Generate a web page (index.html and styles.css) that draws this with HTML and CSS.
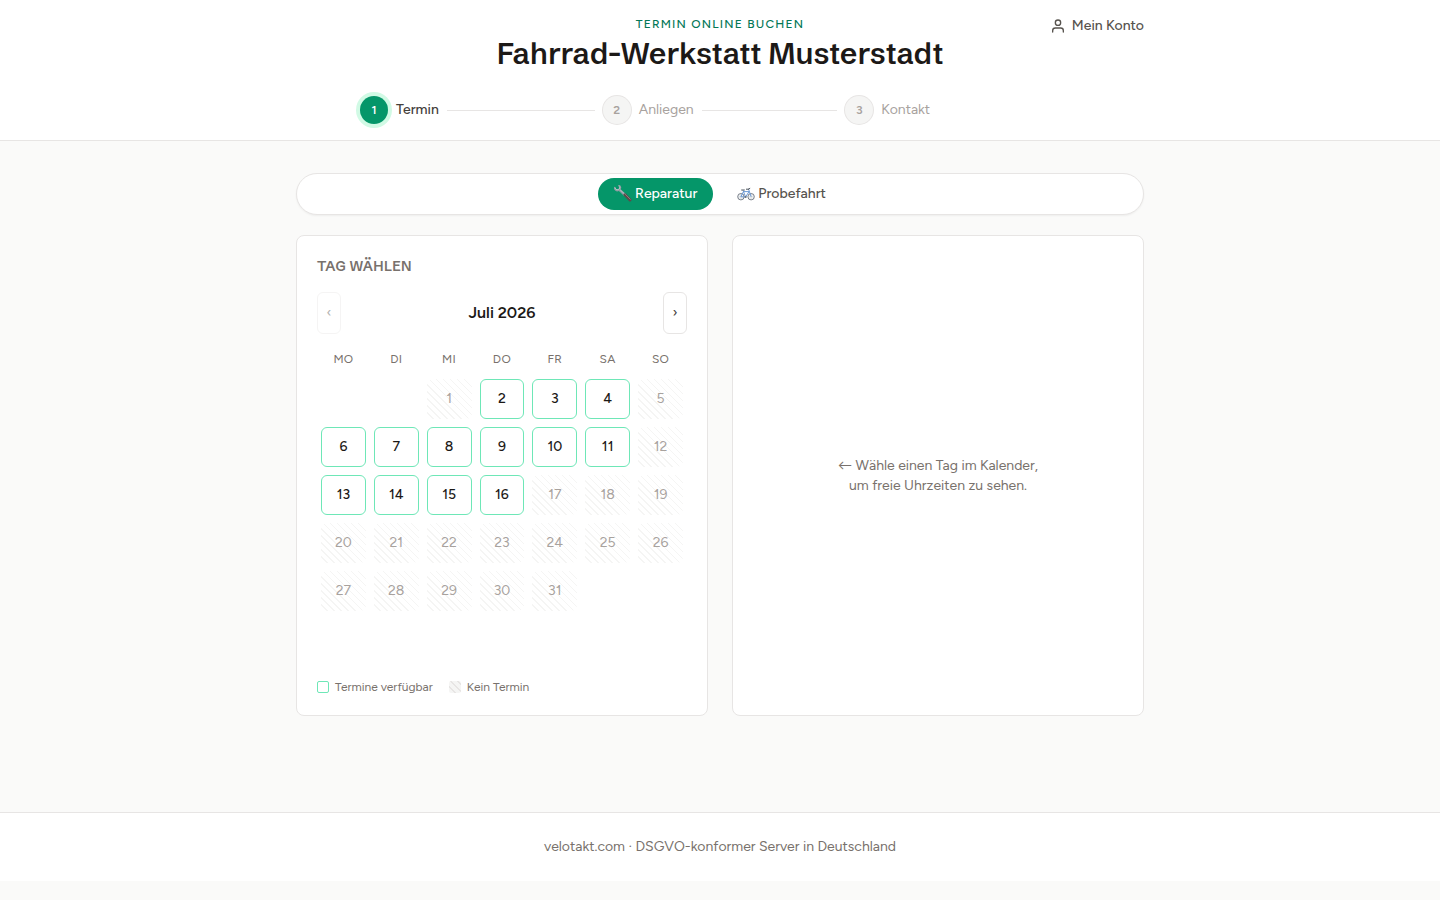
FILE: index.html
```html
<!DOCTYPE html>
<html lang="de">
<head>
  <meta charset="UTF-8" />
  <meta name="viewport" content="width=device-width, initial-scale=1.0" />
  <title>Termin online buchen - Fahrrad-Werkstatt Musterstadt</title>
  <link rel="stylesheet" href="styles.css">
</head>
<body>

  <header class="kopf">
    <div class="kopf-inner">
      <div class="kopf-titel">
        <p class="kopf-label">Termin online buchen</p>
        <h1>Fahrrad-Werkstatt Musterstadt</h1>
      </div>
      <a class="konto" href="#">
        <svg width="16" height="16" viewBox="0 0 24 24" fill="none" stroke="currentColor" stroke-width="2" stroke-linecap="round" stroke-linejoin="round" aria-hidden="true">
          <path d="M20 21v-2a4 4 0 0 0-4-4H8a4 4 0 0 0-4 4v2" />
          <circle cx="12" cy="7" r="4" />
        </svg>
        Mein Konto
      </a>
    </div>

    <ol class="schritte">
      <li class="schritt aktiv"><span class="nummer">1</span><span>Termin</span></li>
      <li class="schritt"><span class="nummer">2</span><span>Anliegen</span></li>
      <li class="schritt"><span class="nummer">3</span><span>Kontakt</span></li>
    </ol>
  </header>

  <main>
    <div class="tabs">
      <button type="button" class="tab aktiv">
        <svg width="18" height="18" viewBox="0 0 18 18" fill="none" aria-hidden="true">
          <path d="M5 4.4 11 10" stroke="#8d9ba1" stroke-width="2.6" />
          <path d="M5.4 4.2 11 9.4" stroke="#c3ced2" stroke-width="0.8" />
          <path d="M11 9.8 16 15" stroke="#5d4a4a" stroke-width="3" stroke-linecap="round" />
          <path d="M11.4 9.4 16.2 14.2" stroke="#94807e" stroke-width="0.9" stroke-linecap="round" />
          <path d="M.8 2C.4 4.4 2.4 6 4.6 5.2 6.8 4.4 7 1.4 4.4.2" stroke="#8d9ba1" stroke-width="1.9" />
          <path d="M1 2.8C1.4 4.4 2.8 5 4.4 4.4 5.6 3.8 6 2.6 5.6 1.6" stroke="#d3dce0" stroke-width="0.7" />
        </svg>
        Reparatur
      </button>
      <button type="button" class="tab">
        <svg width="18" height="18" viewBox="0 0 18 18" fill="none" aria-hidden="true">
          <circle cx="3.9" cy="11.7" r="3.2" fill="#f3f5f7" stroke="#6a717a" stroke-width="0.9" />
          <circle cx="14.1" cy="11.7" r="3.2" fill="#f3f5f7" stroke="#6a717a" stroke-width="0.9" />
          <path d="M3.9 8.5v6.4M.7 11.7h6.4M14.1 8.5v6.4M10.9 11.7h6.4" stroke="#b4bac1" stroke-width="0.4" />
          <path d="M3.9 11.7 6.4 6.6H12L8.6 12zM6 5.2 8.6 12M11.6 4.2l2.5 7.5" stroke="#6d9ad6" stroke-width="1" stroke-linejoin="round" />
          <path d="M4.6 5h2.8M11.4 4.2h-2M11.4 4.2l1.4-.8" stroke="#4f565e" stroke-width="1" stroke-linecap="round" />
          <circle cx="8.6" cy="12" r="1.1" fill="#6a717a" />
        </svg>
        Probefahrt
      </button>
    </div>

    <div class="spalten">
      <section class="karte">
        <h2>Tag wählen</h2>

        <div class="monat">
          <button type="button" aria-label="Vorheriger Monat" disabled>‹</button>
          <strong>Juli 2026</strong>
          <button type="button" aria-label="Nächster Monat">›</button>
        </div>

        <div class="kalender">
          <table>
            <thead>
              <tr><th>Mo</th><th>Di</th><th>Mi</th><th>Do</th><th>Fr</th><th>Sa</th><th>So</th></tr>
            </thead>
            <tbody id="tage"></tbody>
          </table>
        </div>

        <div class="legende">
          <span><i class="feld frei"></i>Termine verfügbar</span>
          <span><i class="feld belegt"></i>Kein Termin</span>
        </div>
      </section>

      <section class="karte hinweis">
        <p><span class="pfeil">←</span> Wähle einen Tag im Kalender,<br>um freie Uhrzeiten zu sehen.</p>
      </section>
    </div>
  </main>

  <footer class="footer">velotakt.com · DSGVO-konformer Server in Deutschland</footer>

  <script>
    const freieTage = [2, 3, 4, 6, 7, 8, 9, 10, 11, 13, 14, 15, 16];
    const ersterWochentag = 2; // 1. Juli ist ein Mittwoch
    const anzahlTage = 31;
    const tbody = document.getElementById('tage');

    let zeile;
    for (let i = 0; i < ersterWochentag + anzahlTage; i++) {
      if (i % 7 === 0) {
        zeile = tbody.insertRow();
      }
      const zelle = zeile.insertCell();
      const tag = i - ersterWochentag + 1;
      if (tag < 1) continue;

      const btn = document.createElement('button');
      btn.type = 'button';
      btn.className = 'tag';
      btn.textContent = tag;
      btn.disabled = !freieTage.includes(tag);
      zelle.appendChild(btn);
    }
  </script>
</body>
</html>
```
FILE: styles.css
```css
* {
  box-sizing: border-box;
}

body {
  font-family: Figtree, Lato, 'Open Sans', sans-serif;
  font-size: 14px;
  line-height: 20px;
  background-color: #fafaf9;
  margin: 0;
  color: #1c1917;
}

h1, h2, p {
  margin: 0;
}

h1, h2 {
  font-family: 'Schibsted Grotesk', 'Libre Franklin', Inter, sans-serif;
  font-weight: 600;
}

button {
  font: inherit;
  cursor: pointer;
}

/* Kopfbereich */
.kopf {
  background-color: #fff;
  border-bottom: 1px solid #e7e5e4;
  padding: 16px 24px;
}

.kopf-inner {
  display: grid;
  grid-template-columns: 1fr auto 1fr;
  align-items: start;
  max-width: 848px;
  margin: 0 auto 24px;
}

.kopf-titel {
  grid-column: 2;
  text-align: center;
}

.kopf-label {
  font-size: 12px;
  line-height: 16px;
  font-weight: 500;
  letter-spacing: 0.1em;
  text-transform: uppercase;
  color: #047857;
}

h1 {
  font-size: 30px;
  line-height: 36px;
  margin-top: 4px;
}

.konto {
  justify-self: end;
  display: flex;
  align-items: center;
  gap: 6px;
  font-weight: 500;
  color: #57534e;
  text-decoration: none;
}

.schritte {
  display: grid;
  grid-template-columns: repeat(3, 1fr);
  gap: 8px;
  max-width: 720px;
  margin: 0 auto;
  padding: 0;
  list-style: none;
}

.schritt {
  display: flex;
  align-items: center;
  gap: 8px;
  color: #a8a29e;
}

.schritt::after {
  content: '';
  flex: 1;
  height: 1px;
  background-color: #e7e5e4;
}

.schritt:last-child::after {
  display: none;
}

.schritt.aktiv {
  color: #44403c;
  font-weight: 500;
}

.nummer {
  display: flex;
  align-items: center;
  justify-content: center;
  width: 28px;
  height: 28px;
  border-radius: 50%;
  background-color: #f5f5f4;
  box-shadow: 0 0 0 1px #e7e5e4;
  font-size: 12px;
  font-weight: 600;
}

.aktiv .nummer {
  background-color: #059669;
  box-shadow: 0 0 0 4px #d1fae5;
  color: #fff;
}

/* Inhalt */
main {
  max-width: 896px;
  margin: 0 auto;
  padding: 32px 24px 96px;
}

.tabs {
  display: flex;
  justify-content: center;
  gap: 8px;
  padding: 4px;
  margin-bottom: 20px;
  background-color: #fff;
  border: 1px solid #e7e5e4;
  border-radius: 999px;
  box-shadow: 0 1px 2px rgba(0,0,0,0.05);
}

.tab {
  display: flex;
  align-items: center;
  gap: 3px;
  padding: 6px 16px;
  border: none;
  border-radius: 999px;
  background: none;
  color: #57534e;
  font-weight: 500;
}

.tab.aktiv {
  background-color: #059669;
  color: #fff;
}

.spalten {
  display: grid;
  grid-template-columns: 1fr 1fr;
  gap: 24px;
}

.karte {
  background-color: #fff;
  border: 1px solid #e7e5e4;
  border-radius: 8px;
  padding: 20px;
}

h2 {
  font-size: 14px;
  line-height: 20px;
  letter-spacing: 0.025em;
  text-transform: uppercase;
  color: #78716c;
}

/* Kalender */
.monat {
  display: flex;
  align-items: center;
  justify-content: space-between;
  margin: 16px 0 8px;
}

.monat strong {
  font-size: 16px;
  font-weight: 600;
}

.monat button {
  width: 24px;
  height: 42px;
  padding: 0;
  border: 1px solid #e7e5e4;
  border-radius: 6px;
  background-color: #fff;
  color: #44403c;
}

.monat button:disabled {
  opacity: 0.4;
  cursor: default;
}

/* Platz für sechs Wochen */
.kalender {
  height: 321px;
}

table {
  width: 100%;
  table-layout: fixed;
  border-collapse: collapse;
}

th {
  padding: 9px 0 8px;
  font-size: 12px;
  line-height: 16px;
  font-weight: 400;
  letter-spacing: 0.025em;
  text-transform: uppercase;
  color: #78716c;
}

td {
  padding: 4px;
}

.tag {
  display: block;
  width: 100%;
  height: 40px;
  padding: 0;
  border: 1px solid #6ee7b7;
  border-radius: 6px;
  background-color: #fff;
  color: #1c1917;
  font-weight: 500;
}

.tag:disabled {
  border: none;
  background: repeating-linear-gradient(45deg, #fff 0 4px, #f5f5f4 4px 5px);
  color: #a8a29e;
  font-weight: 400;
  cursor: default;
}

.legende {
  display: flex;
  gap: 16px;
  margin-top: 16px;
  font-size: 12px;
  line-height: 16px;
  color: #78716c;
}

.legende span {
  display: flex;
  align-items: center;
  gap: 6px;
}

.feld {
  width: 12px;
  height: 12px;
  border-radius: 2px;
}

.feld.frei {
  border: 1px solid #6ee7b7;
}

.feld.belegt {
  background: repeating-linear-gradient(45deg, #f5f5f4 0 4px, #e7e5e4 4px 5px);
}

.hinweis {
  display: flex;
  align-items: center;
  justify-content: center;
  text-align: center;
  color: #78716c;
}

.pfeil {
  font-family: Lato, sans-serif;
}

.footer {
  padding: 24px;
  background-color: #fff;
  border-top: 1px solid #e7e5e4;
  text-align: center;
  color: #78716c;
}

@media (max-width: 700px) {
  .spalten {
    grid-template-columns: 1fr;
  }
}
```
